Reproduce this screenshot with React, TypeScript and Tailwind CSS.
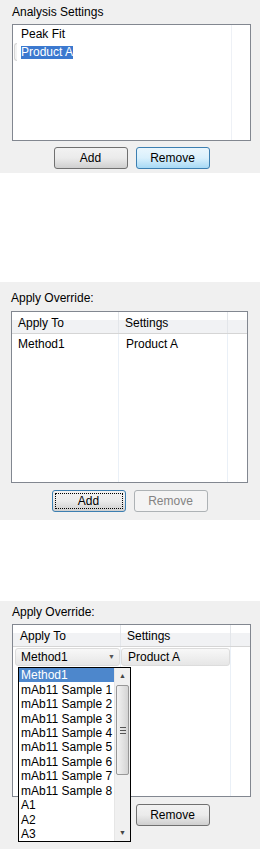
import React from 'react'

const font = { fontFamily: '"Liberation Sans", Arial, sans-serif' }

function WinButton({ label, variant = 'normal' }: { label: string; variant?: 'normal' | 'hover' | 'focus' | 'disabled' }) {
  const base = 'flex h-[22px] w-[74px] items-center justify-center rounded-[3px] border text-[12px] leading-[14px]'
  if (variant === 'hover') {
    return (
      <div className={`${base} border-[#3c7fb1] bg-gradient-to-b from-[#eaf6fd] via-[#d9f0fc] to-[#a7d9f5] text-black`}>{label}</div>
    )
  }
  if (variant === 'disabled') {
    return <div className={`${base} border-[#adb2b5] bg-[#f4f4f4] text-[#838383]`}>{label}</div>
  }
  if (variant === 'focus') {
    return (
      <div className={`${base} border-[#3c7fb1] bg-gradient-to-b from-[#f2f2f2] via-[#ebebeb] to-[#cfcfcf] p-[2px] text-black`}>
        <div className="flex h-full w-full items-center justify-center border border-dotted border-black">{label}</div>
      </div>
    )
  }
  return (
    <div className={`${base} border-[#707070] bg-gradient-to-b from-[#f2f2f2] via-[#ebebeb] to-[#cfcfcf] text-black`}>{label}</div>
  )
}

const dropItems = [
  'Method1',
  'mAb11 Sample 1',
  'mAb11 Sample 2',
  'mAb11 Sample 3',
  'mAb11 Sample 4',
  'mAb11 Sample 5',
  'mAb11 Sample 6',
  'mAb11 Sample 7',
  'mAb11 Sample 8',
  'A1',
  'A2',
  'A3',
]

const headerBg = 'bg-[linear-gradient(to_bottom,#ffffff_0%,#ffffff_38%,#f1f2f4_38%,#f1f2f4_100%)]'

export default function App() {
  return (
    <div className="w-[260px] bg-white text-[12px] leading-[14px] text-black" style={font}>
      {/* Analysis settings */}
      <section className="flex h-[173px] flex-col bg-[#f0f0f0] pl-[12px] pt-[3px]">
        <div className="h-[19px] leading-[19px]">Analysis Settings</div>
        <div className="mt-[2px] flex h-[117px] w-[239px] border border-[#828790] bg-white">
          <div className="flex-1">
            <div className="flex h-[18px] items-center pl-[1px]">
              <span className="h-[18px] w-[3px]" />
              <span className="ml-[4px]">Peak Fit</span>
            </div>
            <div className="flex h-[18px] items-center pl-[1px]">
              <span className="h-[18px] w-[3px] rounded-l-[3px] border border-r-0 border-[#d6d6d6] bg-[#f3f3f3]" />
              <span className="ml-[4px] bg-[#3b79cf] leading-[13px] text-white">Product A</span>
            </div>
          </div>
          <div className="w-[19px] border-l border-[#eef1f6]" />
        </div>
        <div className="mt-[6px] flex w-[239px] justify-center gap-[8px]">
          <WinButton label="Add" />
          <WinButton label="Remove" variant="hover" />
        </div>
      </section>

      <div className="h-[109px]" />

      {/* Apply override */}
      <section className="flex h-[238px] flex-col bg-[#f0f0f0] pl-[11px] pt-[7px]">
        <div className="h-[19px] leading-[19px]">Apply Override:</div>
        <div className="mt-[3px] flex h-[172px] w-[237px] flex-col border border-[#828790] bg-white">
          <div className={`flex h-[22px] border-b border-[#d5d5d5] ${headerBg}`}>
            <div className="flex w-[107px] items-center border-r border-[#e3e6ea] pl-[6px]">Apply To</div>
            <div className="flex w-[109px] items-center border-r border-[#e3e6ea] pl-[6px]">Settings</div>
            <div className="flex-1" />
          </div>
          <div className="flex flex-1">
            <div className="w-[107px] border-r border-[#eaf0f7] pl-[6px]">
              <div className="flex h-[20px] items-center">Method1</div>
            </div>
            <div className="w-[109px] border-r border-[#eaf0f7] pl-[7px]">
              <div className="flex h-[20px] items-center">Product A</div>
            </div>
            <div className="flex-1" />
          </div>
        </div>
        <div className="mt-[7px] flex w-[237px] justify-center gap-[8px]">
          <WinButton label="Add" variant="focus" />
          <WinButton label="Remove" variant="disabled" />
        </div>
      </section>

      <div className="h-[81px]" />

      {/* Apply override with open dropdown */}
      <section className="relative flex h-[248px] flex-col bg-[#f0f0f0] pl-[12px] pt-[2px]">
        <div className="h-[19px] leading-[19px]">Apply Override:</div>
        <div className="mt-[2px] flex h-[173px] w-[239px] flex-col border border-[#828790] bg-white">
          <div className={`flex h-[22px] border-b border-[#d5d5d5] ${headerBg}`}>
            <div className="flex w-[108px] items-center border-r border-[#e3e6ea] pl-[7px]">Apply To</div>
            <div className="flex w-[110px] items-center border-r border-[#e3e6ea] pl-[6px]">Settings</div>
            <div className="flex-1" />
          </div>
          <div className="flex flex-1">
            <div className="w-[108px] border-r border-[#eaf0f7] pl-[2px] pt-[1px]">
              <div className="flex h-[18px] w-[105px] items-center justify-between rounded-[3px] border border-[#dcdcdc] bg-gradient-to-b from-[#f8f8f8] to-[#e6e6e6] pl-[5px] pr-[4px]">
                <span>Method1</span>
                <span className="text-[7px] text-[#555]">▼</span>
              </div>
            </div>
            <div className="w-[110px] border-r border-[#eaf0f7] pt-[1px]">
              <div className="flex h-[18px] w-[109px] items-center rounded-[3px] border border-[#dcdcdc] bg-gradient-to-b from-[#f8f8f8] to-[#e6e6e6] pl-[6px]">
                Product A
              </div>
            </div>
            <div className="flex-1" />
          </div>
        </div>
        <div className="mt-[7px] flex w-[239px] justify-center gap-[8px]">
          <WinButton label="Add" />
          <WinButton label="Remove" />
        </div>

        {/* open combo list */}
        <div className="absolute left-[18px] top-[66px] flex h-[175px] w-[113px] border border-black bg-white">
          <div className="flex-1 overflow-hidden">
            {dropItems.map((item, i) => (
              <div
                key={item}
                className={`flex h-[14.45px] items-center whitespace-nowrap pl-[2px] leading-[14px] ${i === 0 ? 'bg-[#4d87cc] text-white' : ''}`}
              >
                {item}
              </div>
            ))}
          </div>
          <div className="flex w-[16px] flex-col items-center border-l border-[#e6e6e6] bg-[#f0f0f0]">
            <div className="flex h-[16px] items-center text-[7px] text-[#444]">▲</div>
            <div className="mt-[1px] flex h-[90px] w-[13px] items-center justify-center rounded-[2px] border border-[#979797] bg-gradient-to-r from-[#f3f3f3] to-[#d4d4d4]">
              <div className="flex flex-col gap-[2px]">
                <div className="h-px w-[6px] bg-[#555]" />
                <div className="h-px w-[6px] bg-[#555]" />
                <div className="h-px w-[6px] bg-[#555]" />
              </div>
            </div>
            <div className="flex-1" />
            <div className="flex h-[16px] items-center text-[7px] text-[#444]">▼</div>
          </div>
        </div>
      </section>
    </div>
  )
}
